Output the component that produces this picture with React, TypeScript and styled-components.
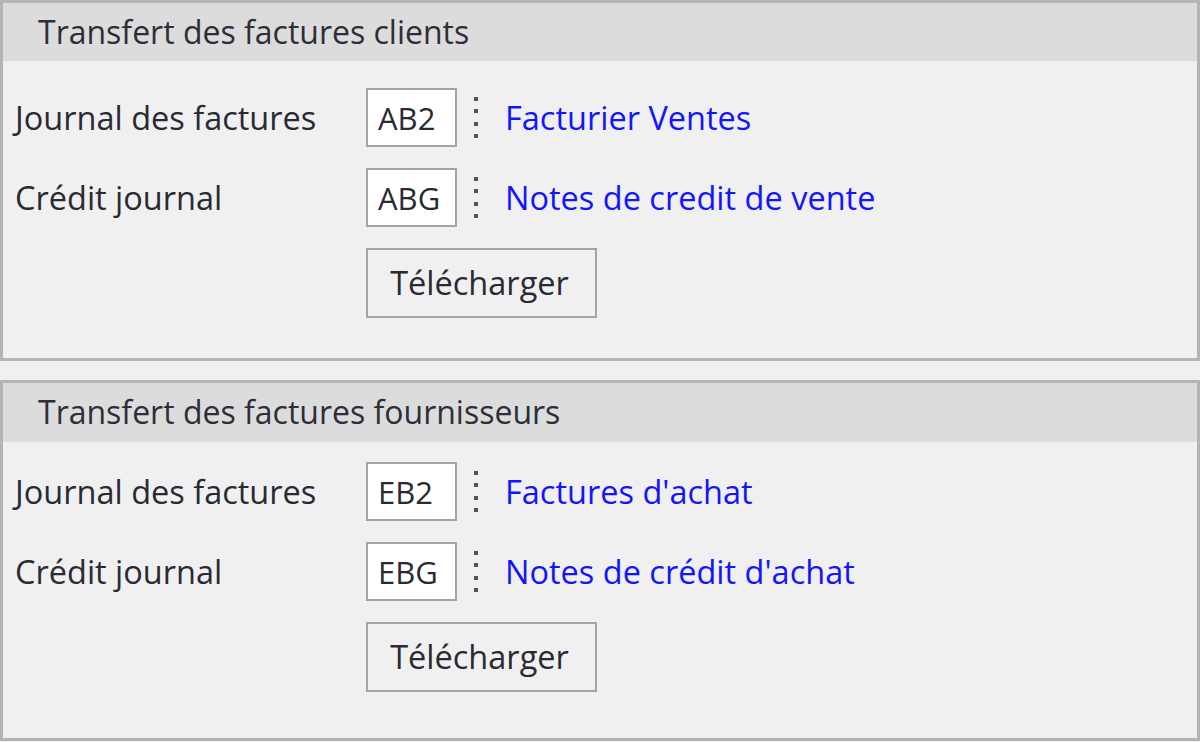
import React from "react";
import styled, { createGlobalStyle } from "styled-components";

const GlobalStyle = createGlobalStyle`
  html, body {
    margin: 0;
    padding: 0;
    background: #f0f0f0;
  }
  body {
    font-family: "Open Sans", "Noto Sans", "Liberation Sans", sans-serif;
  }
  * { box-sizing: border-box; }
`;

const Page = styled.div`
  width: 1200px;
  height: 742px;
  display: flex;
  flex-direction: column;
  gap: 19px;
  background: #f0f0f0;
  overflow: hidden;
`;

const Panel = styled.section<{ $top: number; $bottom: number; $headerH: number }>`
  border: 3px solid #b4b4b4;
  background: #f0f0f0;
  display: flex;
  flex-direction: column;

  & > header {
    height: ${(p) => p.$headerH}px;
  }
  & > div {
    padding-top: ${(p) => p.$top}px;
    padding-bottom: ${(p) => p.$bottom}px;
  }
`;

const Header = styled.header`
  background: #dcdcdc;
  display: flex;
  align-items: center;
  padding-left: 35px;
  padding-bottom: 2px;
  font-size: 32px;
  color: #2e2e38;
`;

const Body = styled.div`
  display: flex;
  flex-direction: column;
  gap: 21px;
  padding-left: 12px;
`;

const Row = styled.div`
  display: grid;
  grid-template-columns: 351px 91px 17px 4px 27px auto;
  align-items: center;
  height: 59px;
`;

const Label = styled.span`
  font-size: 32.5px;
  color: #2a2a34;
  grid-column: 1;
`;

const CodeBox = styled.div`
  grid-column: 2;
  height: 59px;
  background: #ffffff;
  border: 2px solid #a3a3a3;
  display: flex;
  align-items: center;
  padding-left: 10px;
  font-size: 31px;
  color: #2a2a34;
`;

const Dots = styled.div`
  grid-column: 4;
  display: flex;
  flex-direction: column;
  gap: 8.3px;
  & > i {
    display: block;
    width: 4px;
    height: 4px;
    background: #555;
  }
`;

const Link = styled.span`
  grid-column: 6;
  font-size: 32.5px;
  color: #1414ff;
`;

const ButtonRow = styled.div`
  padding-left: 351px;
`;

const Button = styled.button`
  width: 231px;
  height: 70px;
  border: 2px solid #a3a3a3;
  background: #f0f0f0;
  font-family: "Open Sans", "Noto Sans", "Liberation Sans", sans-serif;
  font-size: 32.5px;
  color: #2a2a34;
  padding: 0 4px 2px 0;
  cursor: default;
`;

type Line = { label: string; code: string; link: string };

const JournalRow = ({ label, code, link }: Line) => (
  <Row>
    <Label>{label}</Label>
    <CodeBox>{code}</CodeBox>
    <Dots>
      <i />
      <i />
      <i />
      <i />
    </Dots>
    <Link>{link}</Link>
  </Row>
);

const sections = [
  {
    title: "Transfert des factures clients",
    top: 27,
    bottom: 40,
    headerH: 58,
    rows: [
      { label: "Journal des factures", code: "AB2", link: "Facturier Ventes" },
      { label: "Crédit journal", code: "ABG", link: "Notes de credit de vente" },
    ],
  },
  {
    title: "Transfert des factures fournisseurs",
    top: 20,
    bottom: 46,
    headerH: 59,
    rows: [
      { label: "Journal des factures", code: "EB2", link: "Factures d'achat" },
      { label: "Crédit journal", code: "EBG", link: "Notes de crédit d'achat" },
    ],
  },
];

export default function App() {
  return (
    <>
      <GlobalStyle />
      <Page>
        {sections.map((s) => (
          <Panel key={s.title} $top={s.top} $bottom={s.bottom} $headerH={s.headerH}>
            <Header>{s.title}</Header>
            <Body>
              {s.rows.map((r) => (
                <JournalRow key={r.code} {...r} />
              ))}
              <ButtonRow>
                <Button>Télécharger</Button>
              </ButtonRow>
            </Body>
          </Panel>
        ))}
      </Page>
    </>
  );
}
